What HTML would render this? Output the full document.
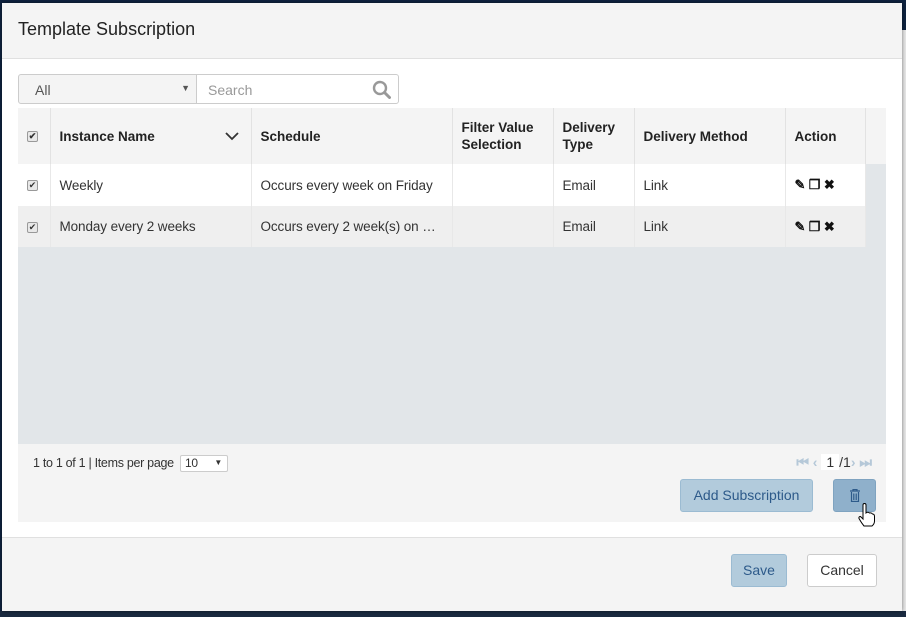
<!DOCTYPE html>
<html><head><meta charset="utf-8"><style>
*{box-sizing:border-box;margin:0;padding:0}
body{width:906px;height:617px;overflow:hidden;font-family:"Liberation Sans",sans-serif;font-size:14px;color:#333;background:#5a5a5a;position:relative}
.bgtop{position:absolute;left:0;top:0;width:906px;height:30px;background:#0f2340}
.bgright{position:absolute;left:895px;top:30px;width:11px;height:587px;background:#e8e8e8}
.bgleft{position:absolute;left:0;top:0;width:3px;height:617px;background:#0f2340}
.bgbot{position:absolute;left:0;top:611px;width:906px;height:6px;background:#1a2a40}
.modal{position:absolute;left:2px;top:3px;width:900px;height:608px;background:#fff;box-shadow:0 0 4px rgba(0,0,0,.5)}
.hdr{height:56px;background:#f4f4f4;border-bottom:1px solid #e0e0e0;padding:16px 16px;font-size:18px;color:#222}
.sel{position:absolute;left:16px;top:71px;width:179px;height:30px;border:1px solid #ccc;border-radius:3px 0 0 3px;background:#f4f4f4;padding:7px 16px;color:#555}
.sel:after{content:"▼";position:absolute;right:6px;top:8px;font-size:9px;color:#555}
.srch{position:absolute;left:194px;top:71px;width:203px;height:30px;border:1px solid #ccc;border-radius:0 3px 3px 0;background:#fff;padding:7px 11px;color:#999}
.grid{position:absolute;left:16px;top:105px;width:868px;height:414px;background:#f4f4f4}
.gbody{position:absolute;left:0;top:56px;width:868px;height:280px;background:#e2e6e9}
table{position:absolute;left:0;top:0;border-collapse:collapse;width:847px;table-layout:fixed}
th{height:56px;background:#f4f4f4;text-align:left;font-weight:bold;font-size:13.5px;padding:0 9px;border-right:1px solid #e2e2e2;color:#222;line-height:17px}
td{padding:0 9px;border-right:1px solid #e8e8e8;white-space:nowrap;overflow:hidden;text-overflow:ellipsis;color:#333;font-size:13.5px;letter-spacing:-0.1px}
tr.r1 td{height:42px;background:#fff}
tr.r2 td{height:41px;background:#efefef}
.hfill{position:absolute;left:847px;top:0;width:21px;height:56px;background:#f4f4f4;border-left:1px solid #e2e2e2}
.cb{display:inline-block;width:11px;height:11px;border:1px solid #999;border-radius:2px;background:#e8e8e8;font-size:9px;line-height:9px;text-align:center;color:#333;vertical-align:middle}
.ft{position:absolute;left:15px;top:347px;font-size:12.5px;color:#333;letter-spacing:-0.3px}
.pp{display:inline-block;width:48px;height:17px;border:1px solid #ccc;border-radius:2px;background:#fff;padding:0 4px;position:relative;vertical-align:middle;margin-left:3px;font-size:12px}
.pg{position:absolute;right:14px;top:346px;font-size:14px;color:#b5c8d8;font-weight:bold}
.btn{position:absolute;border:1px solid #9bbbd2;border-radius:3px;background:#b2cbdc;color:#2d5a8a;font-size:14px;text-align:center}
.ftr{position:absolute;left:0;top:534px;width:900px;height:74px;background:#f4f4f4;border-top:1px solid #e0e0e0}
</style></head><body>
<div class="bgtop"></div><div class="bgright"></div><div class="bgleft"></div><div class="bgbot"></div>
<div class="modal">
<div class="hdr">Template Subscription</div>
<div class="sel">All</div>
<div class="srch">Search
<svg style="position:absolute;right:7px;top:5px" width="19" height="19" viewBox="0 0 19 19"><circle cx="8" cy="8" r="6" fill="none" stroke="#999" stroke-width="2.4"/><path d="M12.5 12.5L17.5 17.5" stroke="#999" stroke-width="3" stroke-linecap="round"/></svg></div>
<div class="grid">
<div class="gbody"></div>
<div class="hfill"></div>
<table>
<colgroup><col style="width:32px"><col style="width:201px"><col style="width:201px"><col style="width:101px"><col style="width:81px"><col style="width:151px"><col style="width:80px"></colgroup>
<tr><th><span class="cb">✔</span></th><th>Instance Name<svg style="position:absolute;left:207px;top:24px" width="14" height="9" viewBox="0 0 14 9"><path d="M1 1L7 7L13 1" fill="none" stroke="#333" stroke-width="1.8"/></svg></th><th>Schedule</th><th>Filter Value Selection</th><th>Delivery Type</th><th>Delivery Method</th><th>Action</th></tr>
<tr class="r1"><td><span class="cb">✔</span></td><td>Weekly</td><td>Occurs every week on Friday</td><td></td><td>Email</td><td>Link</td><td style="font-size:13px;color:#111"><b>✎ ❐ ✖</b></td></tr>
<tr class="r2"><td><span class="cb">✔</span></td><td>Monday every 2 weeks</td><td>Occurs every 2 week(s) on Monday</td><td></td><td>Email</td><td>Link</td><td style="font-size:13px;color:#111"><b>✎ ❐ ✖</b></td></tr>
</table>
<div class="ft">1 to 1 of 1 | Items per page <span class="pp">10<span style="position:absolute;right:5px;top:2px;font-size:8px">▼</span></span></div>
<div class="pg">⏮ ‹ <span style="background:#fff;color:#333;padding:0 5px;font-weight:normal">1</span><span style="color:#333;font-weight:normal">/1</span>› ⏭</div>
<div class="btn" style="left:662px;top:371px;width:133px;height:33px;line-height:31px">Add Subscription</div>
<div class="btn" style="left:815px;top:371px;width:43px;height:33px;background:#8fb0cb;border-color:#7fa3c0">
<svg style="margin-top:9px" width="10" height="13" viewBox="0 0 10 13"><path d="M0 2H10M3 2V0.5H7V2M1.5 3V12.5H8.5V3M3.8 4.5V11M6.2 4.5V11" fill="none" stroke="#2d5a8a" stroke-width="1.2"/></svg></div>
<svg style="position:absolute;left:840px;top:395px" width="18" height="24" viewBox="0 0 18 24"><path d="M5 2Q5 0.5 6.5 0.5Q8 0.5 8 2V10Q10 8.5 11.5 10Q13.5 9.5 14.5 11Q16.5 11 16.5 13.5V18Q16.5 21 14 23H6Q3.5 20 1 15.5Q0.5 13.5 2.5 13.5L5 16Z" fill="#fff" stroke="#000" stroke-width="1"/></svg>
</div>
<div class="ftr">
<div class="btn" style="left:729px;top:16px;width:56px;height:33px;line-height:31px">Save</div>
<div class="btn" style="left:805px;top:16px;width:70px;height:33px;line-height:31px;background:#fff;border-color:#ccc;color:#333">Cancel</div>
</div>
</div>
</body></html>
